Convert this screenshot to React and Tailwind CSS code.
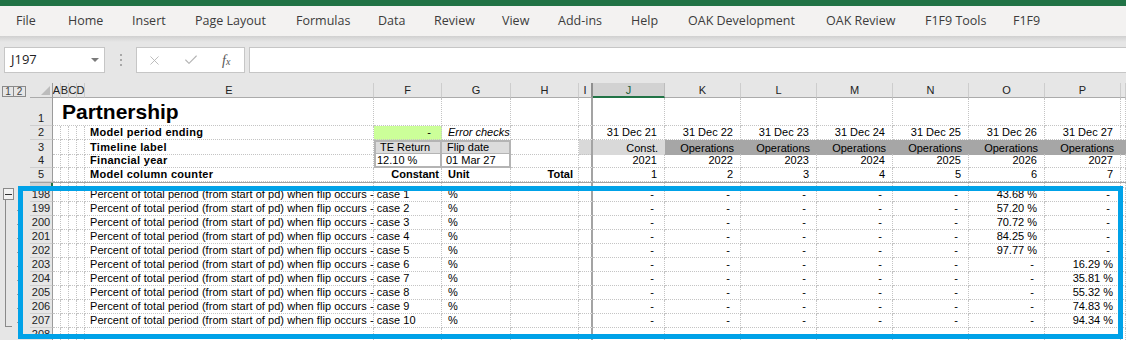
import { X, Check } from "lucide-react";

const COLS =
  "grid grid-cols-[23px_8px_8px_8px_8px_289px_68px_69px_68px_14px_72px_76px_76px_76px_76px_76px_76px_5px]";
const GL = "border-r border-b border-dotted border-[#c4c4c4]";
const TX = "flex items-end text-[11px] leading-[13px] whitespace-nowrap";
const FZ =
  "border-r-2 border-b [border-style:dotted_solid_dotted_dotted] border-r-[#a3a3a3] border-b-[#c4c4c4]";
const HC =
  "bg-[#e6e6e6] border-r border-b border-r-[#cdcdcd] border-b-[#ababab] flex items-end justify-center text-[11px] leading-[13px] text-[#222]";

const tabs = [
  ["File", "w-[52px]"],
  ["Home", "w-[64px]"],
  ["Insert", "w-[63px]"],
  ["Page Layout", "w-[101px]"],
  ["Formulas", "w-[82px]"],
  ["Data", "w-[56px]"],
  ["Review", "w-[68px]"],
  ["View", "w-[56px]"],
  ["Add-ins", "w-[73px]"],
  ["Help", "w-[57px]"],
  ["OAK Development", "w-[138px]"],
  ["OAK Review", "w-[99px]"],
  ["F1F9 Tools", "w-[88px]"],
  ["F1F9", "w-[60px]"],
];

const yrs = [21, 22, 23, 24, 25, 26, 27];
const colO = ["43.68 %", "57.20 %", "70.72 %", "84.25 %", "97.77 %", null, null, null, null, null];
const colP = [null, null, null, null, null, "16.29 %", "35.81 %", "55.32 %", "74.83 %", "94.34 %"];

const RowHead = ({ n }) => (
  <div className="bg-[#e6e6e6] border-r border-b border-r-[#9b9b9b] border-b-[#cfcfcf] flex items-end justify-center text-[11px] leading-[13px] text-[#222]">
    {n}
  </div>
);

const Blank = ({ n }) =>
  Array.from({ length: n }).map((_, i) => <div key={i} className={GL} />);

const Num = ({ children, className = "" }) => (
  <div className={`${GL} ${TX} justify-end pr-[7px] ${className}`}>{children}</div>
);

const Dash = () => (
  <div className={`${GL} ${TX} justify-end pr-[7px]`}>
    <span className="mr-[3px]">-</span>
  </div>
);

function DataRow({ n, i }) {
  return (
    <div className={`${COLS} h-[14px]`}>
      <RowHead n={n} />
      <Blank n={4} />
      <div className={`${GL} ${TX} pl-[5px] tracking-[0.05px]`}>
        Percent of total period (from start of pd) when flip occurs - case {i + 1}
      </div>
      <div className={GL} />
      <div className={`${GL} ${TX} pl-[6px]`}>%</div>
      <div className={GL} />
      <div className={FZ} />
      <Dash />
      <Dash />
      <Dash />
      <Dash />
      <Dash />
      {colO[i] ? <Num>{colO[i]}</Num> : <Dash />}
      {colP[i] ? <Num>{colP[i]}</Num> : <Dash />}
      <div className={GL} />
    </div>
  );
}

function Ribbon() {
  return (
    <div className="font-['Open_Sans','Noto_Sans',sans-serif]">
      <div className="h-[6px] bg-[#217346]" />
      <div className="h-[30px] bg-[#f3f2f1] flex items-center pl-[16px] text-[12.5px] text-[#3c3c3c]">
        {tabs.map(([t, w]) => (
          <span key={t} className={`${w} shrink-0 whitespace-nowrap`}>
            {t}
          </span>
        ))}
      </div>
      <div className="h-[47px] bg-[linear-gradient(to_bottom,#d0d0d0,#e6e6e6_6px)] flex items-start pt-[11px] pl-[4px]">
        <div className="w-[101px] h-[26px] bg-white border border-[#c6c6c6] flex items-center justify-between pl-[6px] pr-[5px] text-[13px] text-[#222]">
          <span>J197</span>
          <svg width="8" height="4" viewBox="0 0 8 4">
            <polygon points="0,0 8,0 4,4" fill="#7a7a7a" />
          </svg>
        </div>
        <div className="w-[31px] h-[26px] flex flex-col items-center justify-center gap-[3px]">
          <span className="w-[2px] h-[2px] bg-[#a8a8a8]" />
          <span className="w-[2px] h-[2px] bg-[#a8a8a8]" />
          <span className="w-[2px] h-[2px] bg-[#a8a8a8]" />
        </div>
        <div className="w-[109px] h-[26px] bg-white border border-[#c6c6c6] flex items-center">
          <span className="w-[36px] flex justify-center">
            <X size={15} strokeWidth={1.4} color="#b4b4b4" />
          </span>
          <span className="w-[36px] flex justify-center">
            <Check size={16} strokeWidth={1.6} color="#b4b4b4" />
          </span>
          <span className="w-[36px] flex justify-center font-['Liberation_Serif',serif] italic text-[14px] text-[#555]">
            f<span className="text-[10px] mt-[4px]">x</span>
          </span>
        </div>
        <div className="ml-[4px] flex-1 h-[26px] bg-white border border-r-0 border-[#c6c6c6]" />
      </div>
    </div>
  );
}

function Gutter() {
  const dots = Array.from({ length: 10 });
  return (
    <div className="w-[30px] shrink-0 bg-[#e6e6e6] flex flex-col">
      <div className="h-[15px] flex items-start pl-[2px] pt-[3px]">
        <span className="w-[12px] h-[11px] border border-[#8a8a8a] text-[10px] leading-[9px] text-center text-[#444]">1</span>
        <span className="w-[12px] h-[11px] border border-l-0 border-[#8a8a8a] text-[10px] leading-[9px] text-center text-[#444]">2</span>
      </div>
      <div className="h-[90px]" />
      <div className="flex">
        <div className="w-[16px] flex flex-col pl-[3px]">
          <div className="w-[11px] h-[12px] border border-[#8a8a8a] bg-[#f2f2f2] flex items-center justify-center">
            <span className="w-[7px] h-[1px] bg-[#333]" />
          </div>
          <div className="ml-[2px] w-[1px] h-[126px] bg-[#8a8a8a]" />
          <div className="ml-[2px] w-[7px] h-[1px] bg-[#8a8a8a]" />
        </div>
        <div className="flex flex-col">
          {dots.map((_, i) => (
            <div key={i} className="h-[14px] flex items-end pb-[5px] pl-[1px]">
              {i > 0 && <span className="w-[1px] h-[1px] bg-[#9a9a9a]" />}
            </div>
          ))}
        </div>
      </div>
    </div>
  );
}

function Sheet() {
  const letters = ["K", "L", "M", "N", "O", "P"];
  return (
    <div className="flex-1 flex flex-col">
      {/* column headers */}
      <div className={`${COLS} h-[15px]`}>
        <div className="bg-[#e6e6e6] border-r border-b border-r-[#9b9b9b] border-b-[#ababab] flex items-end justify-end pr-[2px] pb-[2px]">
          <svg width="9" height="9" viewBox="0 0 9 9">
            <polygon points="9,0 9,9 0,9" fill="#bcbcbc" />
          </svg>
        </div>
        {["A", "B", "C", "D", "E", "F", "G", "H"].map((l) => (
          <div key={l} className={HC}>
            {l}
          </div>
        ))}
        <div className="bg-[#e6e6e6] border-r-2 border-b border-r-[#8f8f8f] border-b-[#ababab] flex items-end justify-center text-[11px] leading-[13px] text-[#222]">
          I
        </div>
        <div className="bg-[#d2d2d2] border-r border-b-2 border-r-[#bdbdbd] border-b-[#217346] flex items-end justify-center text-[11px] leading-[12px] text-[#1f5f3a]">
          J
        </div>
        {letters.map((l) => (
          <div key={l} className={HC}>
            {l}
          </div>
        ))}
        <div className={HC} />
      </div>

      {/* row 1 */}
      <div className={`${COLS} h-[28px]`}>
        <RowHead n={1} />
        <div className={`${GL} col-span-5 flex items-end pl-[9px] pb-[1px] text-[21px] leading-[24px] font-bold whitespace-nowrap`}>
          Partnership
        </div>
        <Blank n={3} />
        <div className={FZ} />
        <Blank n={8} />
      </div>

      {/* row 2 */}
      <div className={`${COLS} h-[14px]`}>
        <RowHead n={2} />
        <Blank n={4} />
        <div className={`${GL} ${TX} pl-[5px] font-bold tracking-[0.3px]`}>Model period ending</div>
        <div className={`${GL} ${TX} justify-end pr-[7px] bg-[#ccff99]`}>
          <span className="mr-[3px]">-</span>
        </div>
        <div className={`${GL} ${TX} pl-[6px] italic`}>Error checks</div>
        <div className={GL} />
        <div className={FZ} />
        {yrs.map((y) => (
          <Num key={y}>31 Dec {y}</Num>
        ))}
        <div className={GL} />
      </div>

      {/* row 3 */}
      <div className={`${COLS} h-[14px]`}>
        <RowHead n={3} />
        <Blank n={4} />
        <div className={`${GL} ${TX} pl-[5px] font-bold tracking-[0.3px]`}>Timeline label</div>
        <div className="border-2 border-[#b4b4b4] bg-[#dcdcdc] flex items-end text-[11px] leading-[11px] whitespace-nowrap pl-[4px]">
          TE Return
        </div>
        <div className="border-t-2 border-r-2 border-b-2 border-[#b4b4b4] bg-[#dcdcdc] flex items-end text-[11px] leading-[11px] whitespace-nowrap pl-[5px]">
          Flip date
        </div>
        <div className={GL} />
        <div className={`${FZ} bg-[#d9d9d9]`} />
        <div className={`${TX} justify-end pr-[7px] bg-[#d9d9d9]`}>Const.</div>
        {yrs.slice(1).map((y) => (
          <div key={y} className={`${TX} justify-end pr-[7px] bg-[#a6a6a6]`}>
            Operations
          </div>
        ))}
        <div className="bg-[#a6a6a6]" />
      </div>

      {/* row 4 */}
      <div className={`${COLS} h-[14px]`}>
        <RowHead n={4} />
        <Blank n={4} />
        <div className={`${GL} ${TX} pl-[5px] font-bold tracking-[0.3px]`}>Financial year</div>
        <div className="border-l-2 border-r-2 border-b-2 border-[#b4b4b4] bg-white flex items-end text-[11px] leading-[11px] whitespace-nowrap pl-[1px]">
          12.10 %
        </div>
        <div className="border-r-2 border-b-2 border-[#b4b4b4] bg-white flex items-end text-[11px] leading-[11px] whitespace-nowrap pl-[4px]">
          01 Mar 27
        </div>
        <div className={GL} />
        <div className={FZ} />
        {yrs.map((y) => (
          <Num key={y}>20{y}</Num>
        ))}
        <div className={GL} />
      </div>

      {/* row 5 */}
      <div className={`${COLS} h-[14px]`}>
        <RowHead n={5} />
        <Blank n={4} />
        <div className={`${GL} ${TX} pl-[5px] font-bold tracking-[0.3px]`}>Model column counter</div>
        <div className={`${GL} ${TX} justify-end pr-[2px] font-bold`}>Constant</div>
        <div className={`${GL} ${TX} pl-[6px] font-bold`}>Unit</div>
        <div className={`${GL} ${TX} justify-end pr-[5px] font-bold`}>Total</div>
        <div className={FZ} />
        {yrs.map((y, i) => (
          <Num key={y}>{i + 1}</Num>
        ))}
        <div className={GL} />
      </div>

      <div className="h-[1px] bg-[#a3a3a3]" />

      {/* row 197, scrolled mostly out of view */}
      <div className={`${COLS} h-[5px] overflow-hidden`}>
        <div className="bg-[#d2d2d2] border-r-2 border-b border-r-[#217346] border-b-[#c8c8c8]" />
        <Blank n={8} />
        <div className={FZ} />
        <Blank n={8} />
      </div>

      {Array.from({ length: 10 }).map((_, i) => (
        <DataRow key={i} n={198 + i} i={i} />
      ))}

      <div className={`${COLS} h-[14px]`}>
        <RowHead n={208} />
        <Blank n={8} />
        <div className={FZ} />
        <Blank n={8} />
      </div>
    </div>
  );
}

export default function App() {
  return (
    <div className="relative w-[1126px] h-[340px] overflow-hidden bg-white text-black">
      <Ribbon />
      <div className="flex font-['Liberation_Sans',Arial,sans-serif]">
        <Gutter />
        <Sheet />
      </div>
      <div className="absolute left-[18px] top-[186px] w-[1105px] h-[153px] border-[5px] border-[#00a2e8] pointer-events-none" />
    </div>
  );
}
